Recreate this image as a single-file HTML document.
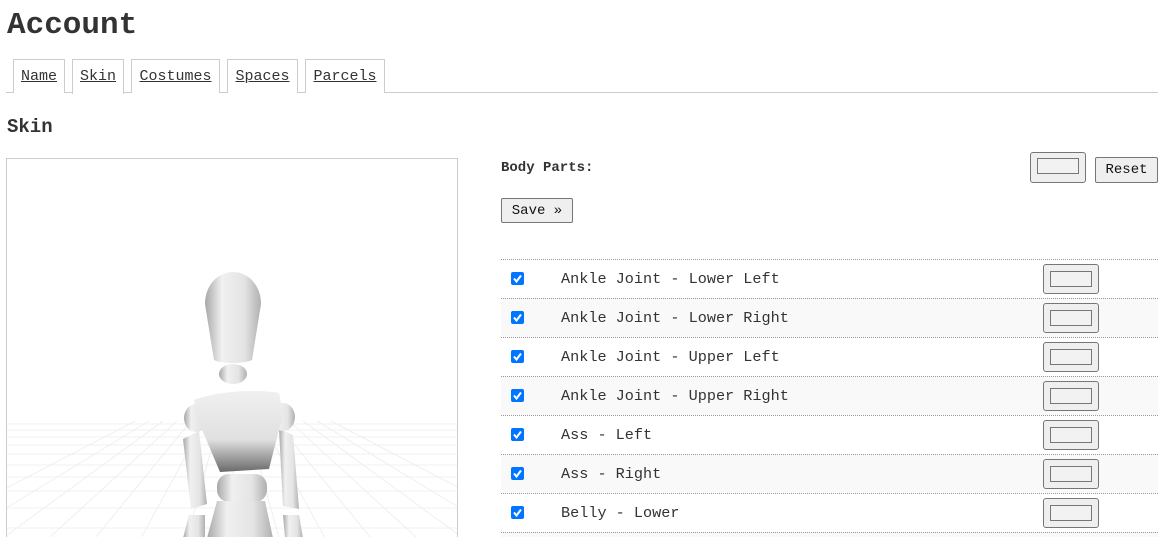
<!DOCTYPE html>
<html><head><meta charset="utf-8"><style>
*{box-sizing:border-box}
html,body{margin:0;width:1165px;height:537px;overflow:hidden}
body{background:#fff;font-family:"Liberation Mono",monospace;color:#333;position:relative}
.abs{position:absolute}
h1{position:absolute;left:7px;top:6px;margin:0;font-size:31px;font-weight:bold;color:#333;line-height:40px}
.tabs{position:absolute;left:6px;top:92px;width:1152px;border-top:1px solid #ccc}
.tab{position:absolute;top:59px;height:34px;border:1px solid #ccc;border-bottom:none;background:#fff;font-size:15px;line-height:34px;text-align:center;color:#333;text-decoration:underline}
.tab.act{height:35px;z-index:2}
h2{position:absolute;left:7px;top:114px;margin:0;font-size:19px;font-weight:bold;line-height:26px}
.cbox{position:absolute;left:6px;top:158px;width:452px;height:379px;border:1px solid #ccc;border-bottom:none;background:#fff;overflow:hidden}
.btn{position:absolute;background:#efefef;border:1px solid #767676;border-radius:2px;font-size:14px;font-family:"Liberation Mono",monospace;color:#111;text-align:center}
.color{position:absolute;width:56px;height:30px;background:#efefef;border:1px solid #767676;border-radius:3px}
.color i{position:absolute;left:6px;top:6px;right:6px;bottom:6px;border:1px solid #777;background:#f2f2f2}
.row{position:absolute;left:501px;width:657px;height:39px;border-top:1px dotted #999}
.row.alt{background:#f9f9f9}
.cb{position:absolute;left:10px;top:12px;width:13px;height:13px;background:#0075ff;border-radius:2px}
.cb svg{position:absolute;left:0;top:0}
.lbl{position:absolute;left:60px;top:0;line-height:38px;font-size:15.2px;color:#333}
.row .color{left:542px;top:4px}
</style></head><body>
<h1>Account</h1>
<div class="tabs"></div>
<div class="tab" style="left:13px;width:52px">Name</div>
<div class="tab act" style="left:72px;width:52px">Skin</div>
<div class="tab" style="left:131px;width:89px">Costumes</div>
<div class="tab" style="left:227px;width:71px">Spaces</div>
<div class="tab" style="left:305px;width:80px">Parcels</div>
<h2>Skin</h2>
<div class="cbox">
<svg width="452" height="379" viewBox="0 0 452 379">
<g stroke="#ececec" stroke-width="0.8">
<line x1="0" y1="265" x2="452" y2="265"/><line x1="0" y1="271" x2="452" y2="271"/><line x1="0" y1="278" x2="452" y2="278"/><line x1="0" y1="286" x2="452" y2="286"/><line x1="0" y1="295" x2="452" y2="295"/><line x1="0" y1="306" x2="452" y2="306"/><line x1="0" y1="318" x2="452" y2="318"/><line x1="0" y1="332" x2="452" y2="332"/><line x1="0" y1="349" x2="452" y2="349"/><line x1="0" y1="369" x2="452" y2="369"/>
<line x1="226" y1="262" x2="226" y2="379"/><line x1="212" y1="262" x2="180" y2="379"/><line x1="240" y1="262" x2="272" y2="379"/><line x1="198" y1="262" x2="134" y2="379"/><line x1="254" y1="262" x2="318" y2="379"/><line x1="184" y1="262" x2="88" y2="379"/><line x1="268" y1="262" x2="364" y2="379"/><line x1="170" y1="262" x2="42" y2="379"/><line x1="282" y1="262" x2="410" y2="379"/><line x1="156" y1="262" x2="-4" y2="379"/><line x1="296" y1="262" x2="456" y2="379"/><line x1="142" y1="262" x2="-50" y2="379"/><line x1="310" y1="262" x2="502" y2="379"/><line x1="128" y1="262" x2="-96" y2="379"/><line x1="324" y1="262" x2="548" y2="379"/>
</g>
<defs><linearGradient id="g" x1="0" x2="1"><stop offset="0" stop-color="#a8a8a8"/><stop offset=".3" stop-color="#f0f0f0"/><stop offset=".7" stop-color="#e4e4e4"/><stop offset="1" stop-color="#b0b0b0"/></linearGradient>
<linearGradient id="t" x1="0" y1="0" x2="0" y2="1"><stop offset="0" stop-color="#f0f0f0"/><stop offset=".6" stop-color="#e0e0e0"/><stop offset="1" stop-color="#6a6a6a"/></linearGradient></defs>
<path d="M176 280 L192 272 L200 345 L184 350Z" fill="url(#g)"/><path d="M272 270 L286 276 L292 350 L276 347Z" fill="url(#g)"/>
<path d="M182 356 L198 356 L198 379 L176 379Z" fill="url(#g)"/><path d="M276 356 L292 356 L296 379 L278 379Z" fill="url(#g)"/>
<ellipse cx="189" cy="259" rx="12" ry="14" fill="url(#g)"/><ellipse cx="276" cy="258" rx="12" ry="14" fill="url(#g)"/>
<path d="M226 113 C211 113 198 126 198 145 L207 201 C215 205 236 205 245 201 L254 145 C254 126 241 113 226 113Z" fill="url(#g)"/>
<ellipse cx="226" cy="215" rx="14" ry="10" fill="url(#g)"/>
<path d="M187 241 C210 232 250 230 272 234 L276 255 L262 310 L213 313 L193 266Z" fill="url(#t)"/>
<rect x="210" y="315" width="50" height="28" rx="12" fill="url(#g)"/>
<path d="M210 342 L258 342 L266 379 L200 379Z" fill="url(#g)"/>
</svg>
</div>
<div class="abs" style="left:501px;top:158px;font-size:14px;font-weight:bold;line-height:20px">Body Parts:</div>
<div class="color" style="left:1030px;top:152px;height:31px"><i style="top:5px;bottom:8px"></i></div>
<div class="btn" style="left:1095px;top:157px;width:63px;height:26px;line-height:25px">Reset</div>
<div class="btn" style="left:501px;top:198px;width:72px;height:25px;line-height:24px">Save »</div>
<div class="row" style="top:259px"><div class="cb"><svg width="13" height="13"><path d="M3 6.5 L5.5 9.5 L10 3.5" stroke="#fff" stroke-width="2" fill="none"/></svg></div><div class="lbl">Ankle Joint - Lower Left</div><div class="color"><i></i></div></div>
<div class="row alt" style="top:298px"><div class="cb"><svg width="13" height="13"><path d="M3 6.5 L5.5 9.5 L10 3.5" stroke="#fff" stroke-width="2" fill="none"/></svg></div><div class="lbl">Ankle Joint - Lower Right</div><div class="color"><i></i></div></div>
<div class="row" style="top:337px"><div class="cb"><svg width="13" height="13"><path d="M3 6.5 L5.5 9.5 L10 3.5" stroke="#fff" stroke-width="2" fill="none"/></svg></div><div class="lbl">Ankle Joint - Upper Left</div><div class="color"><i></i></div></div>
<div class="row alt" style="top:376px"><div class="cb"><svg width="13" height="13"><path d="M3 6.5 L5.5 9.5 L10 3.5" stroke="#fff" stroke-width="2" fill="none"/></svg></div><div class="lbl">Ankle Joint - Upper Right</div><div class="color"><i></i></div></div>
<div class="row" style="top:415px"><div class="cb"><svg width="13" height="13"><path d="M3 6.5 L5.5 9.5 L10 3.5" stroke="#fff" stroke-width="2" fill="none"/></svg></div><div class="lbl">Ass - Left</div><div class="color"><i></i></div></div>
<div class="row alt" style="top:454px"><div class="cb"><svg width="13" height="13"><path d="M3 6.5 L5.5 9.5 L10 3.5" stroke="#fff" stroke-width="2" fill="none"/></svg></div><div class="lbl">Ass - Right</div><div class="color"><i></i></div></div>
<div class="row" style="top:493px"><div class="cb"><svg width="13" height="13"><path d="M3 6.5 L5.5 9.5 L10 3.5" stroke="#fff" stroke-width="2" fill="none"/></svg></div><div class="lbl">Belly - Lower</div><div class="color"><i></i></div></div>
<div class="row alt" style="top:532px;height:5px"></div>
</body></html>
